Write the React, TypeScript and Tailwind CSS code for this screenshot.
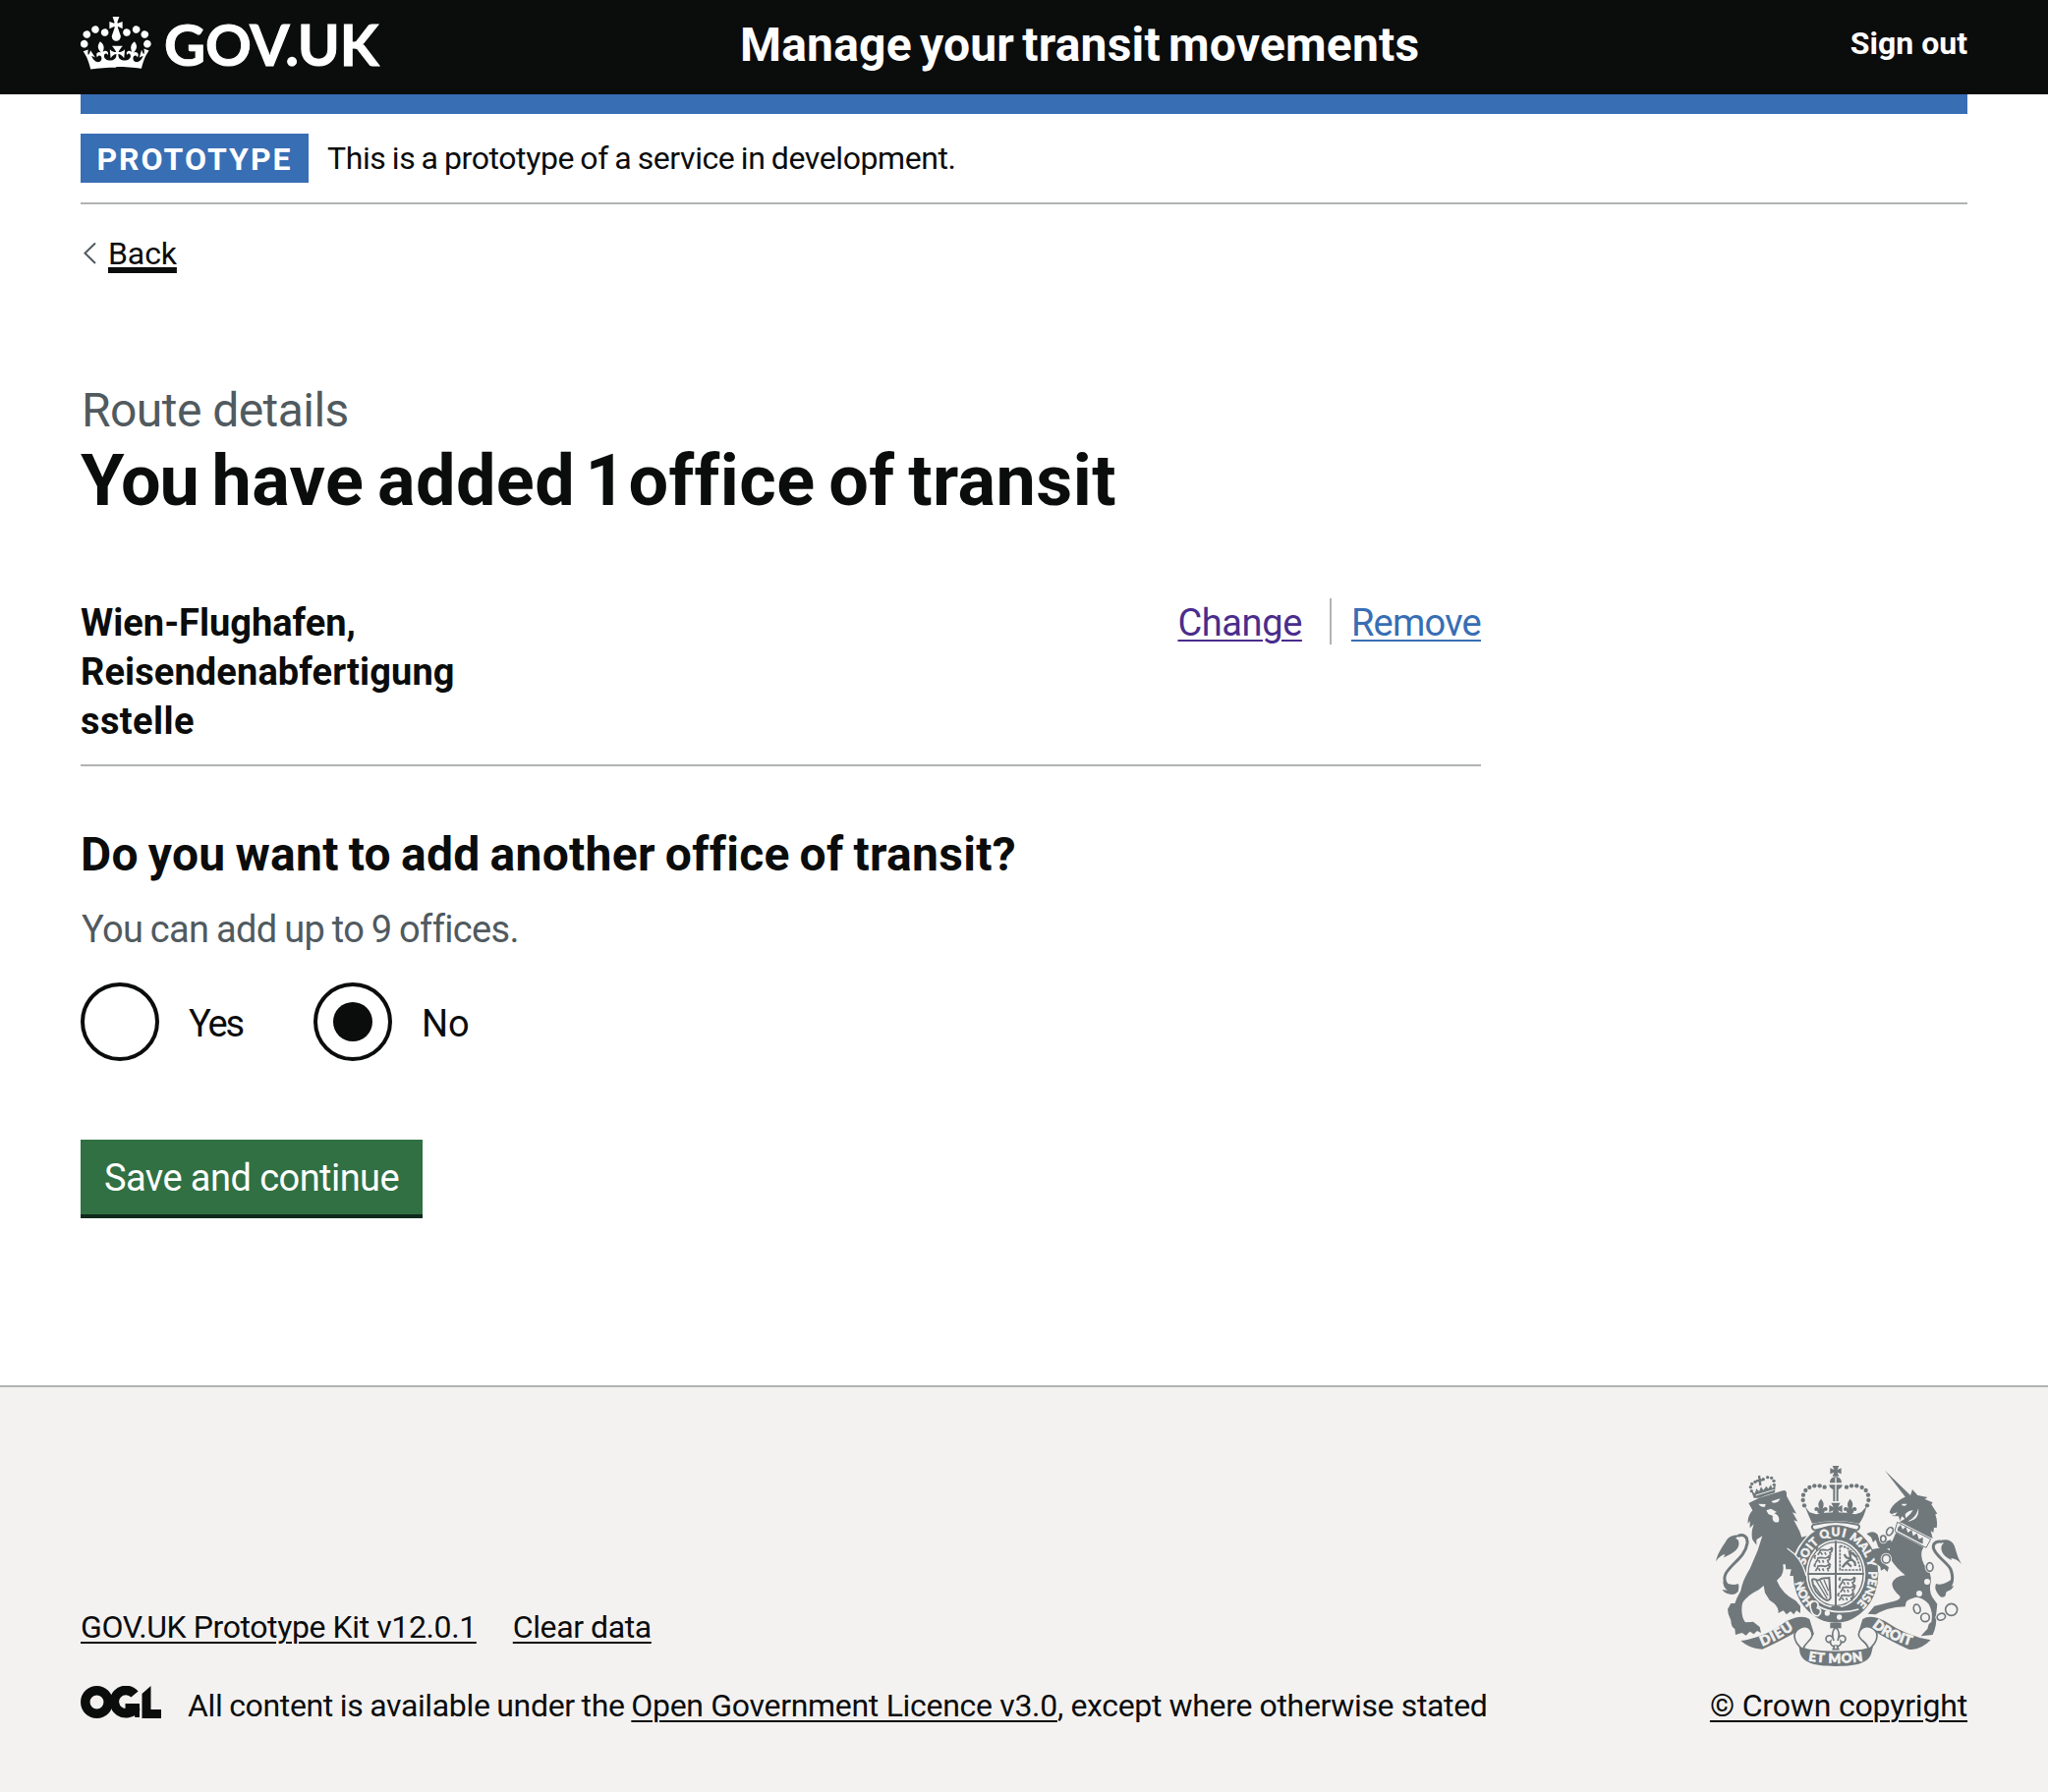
import type { ReactNode } from 'react';

function Crown() {
  return (
    <svg viewBox="0 4 35.800 26.600" className="h-[53.500px] w-[72px] fill-white" aria-hidden="true">
      <path d="M6.7 12.2c1 .4 2.1-.1 2.5-1s-.1-2.1-1-2.5c-1-.4-2.1.1-2.5 1-.4 1 0 2.1 1 2.5m-4.3 2.5c1 .4 2.1-.1 2.5-1s-.1-2.1-1-2.5c-1-.4-2.1.1-2.5 1-.5 1 0 2.1 1 2.5m-1.3 4.8c1 .4 2.1-.1 2.5-1 .4-1-.1-2.1-1-2.5-1-.4-2.1.1-2.5 1-.4 1 0 2.1 1 2.5m10.4-5.8c1 .4 2.1-.1 2.5-1s-.1-2.1-1-2.5c-1-.4-2.1.1-2.5 1s0 2.1 1 2.5m17.4-1.5c-1 .4-2.1-.1-2.5-1s.1-2.1 1-2.5c1-.4 2.1.1 2.5 1 .5 1 0 2.1-1 2.5m4.3 2.5c-1 .4-2.1-.1-2.5-1s.1-2.1 1-2.5c1-.4 2.1.1 2.5 1 .5 1 0 2.1-1 2.5m1.3 4.8c-1 .4-2.1-.1-2.5-1-.4-1 .1-2.1 1-2.5 1-.4 2.1.1 2.5 1 .4 1 0 2.1-1 2.5m-10.4-5.8c-1 .4-2.1-.1-2.5-1s.1-2.1 1-2.5c1-.4 2.1.1 2.5 1s0 2.1-1 2.5m-5.3-4.9 2.4 1.3V6.5l-2.4.8c-.1-.1-.1-.2-.2-.3s1-3 1-3h-3.4s1 2.900 1 3c-.1.1-.2.2-.2.3l-2.4-.8v3.6L17 9c.1.1.2.2.3.3l-1.4 4.2c-.1.2-.1.4-.1.6 0 1.100.8 2 1.900 2.200h.7c1.100-.2 1.900-1.100 1.900-2.200 0-.2 0-.4-.1-.6l-1.4-4.2c0-.1.1-.2.2-.3m-1 20.3c4.6 0 8.9.3 12.8.9 1.100-4.600 2.400-7.200 3.800-9.100l-2.600-.9c.3 1.300.3 1.900 0 2.800-.4-.4-.8-1.200-1.100-2.400l-1.200 4.200c.8-.5 1.400-.9 2-.9-1.200 2.600-2.700 3.200-3.600 3-1.200-.2-1.700-1.300-1.500-2.200.3-1.300 1.600-1.600 2.200-.1 1.200-2.400-.8-3.100-2.100-2.400 2-1.900 2.200-3.600.6-5.700-2.200 1.700-2.200 3.300-1.300 5.500-1.200-1.400-3.300-.7-2.600 1.400.9-1.400 2.100-.5 1.900.8-.2 1.100-1.700 2.100-3.500 1.900-2.600-.2-2.700-2.100-2.700-3.200.6-.1 1.800.5 2.900 2.100l.4-4.500c-1.100 1.200-2.100 1.400-3.200 1.400.4-1.200 2.100-3.100 2.100-3.100h-5.400s1.700 1.900 2.100 3.100c-1.100 0-2.100-.2-3.200-1.400l.4 4.500c1.100-1.600 2.300-2.200 2.900-2.100 0 1.100-.1 3-2.700 3.200-1.800.2-3.300-.8-3.500-1.900-.2-1.300 1-2.200 1.900-.8.7-2.100-1.400-2.800-2.600-1.400.9-2.200.9-3.800-1.300-5.500-1.600 2.100-1.400 3.800.6 5.700-1.300-.7-3.200 0-2.100 2.400.6-1.500 1.900-1.200 2.200.1.2.9-.3 2-1.500 2.200-.9.2-2.400-.4-3.600-3 .6 0 1.200.4 2 .9L5 21c-.3 1.200-.7 2-1.100 2.400-.3-.9-.3-1.500 0-2.800l-2.600.9c1.400 1.900 2.700 4.500 3.800 9.100 3.900-.6 8.200-.9 12.900-.9" />
    </svg>
  );
}

const G = '#70787b';
const B = '#f3f2f1';

const crownBeads: [number, number][] = [
  [288, 157], [284, 141], [285, 125], [292, 111], [304, 102], [319, 97], [335, 97], [350, 101],
  [480, 157], [484, 141], [483, 125], [476, 111], [464, 102], [448, 97], [432, 97], [417, 101],
];
const smallBeads: [number, number][] = [[127, 113], [124, 101], [128, 91], [138, 85], [163, 77], [176, 71], [188, 73], [195, 82], [196, 94]];
const chain: [number, number, number, number, number][] = [
  [549, 236, 9, 13, 30], [529, 259, 8, 10, 0], [538, 320, 12, 13, 0], [671, 345, 10, 13, 0],
  [632, 473, 10, 14, -15], [657, 499, 13, 13, 0], [706, 497, 13, 10, -20], [737, 475, 18, 18, 0],
];

function FleurDeLis({ x, y, s = 1 }: { x: number; y: number; s?: number }) {
  return (
    <g transform={`translate(${x} ${y}) scale(${s})`}>
      <path d="M0-24c8 9 10 16 3 30 3-9 13-11 15-3 1 5-4 8-8 5 1 7-5 9-7 9v6h-6v-6c-2 0-8-2-7-9-4 3-9 0-8-5 2-8 12-6 15 3-7-14-5-21 3-30z" />
    </g>
  );
}

function WalkingLion({ x, y }: { x: number; y: number }) {
  return (
    <g transform={`translate(${x} ${y})`}>
      <path
        d="M4 17l6-8 2-7 10-1 12 2 8-3 6 3-2 5-5 2 3 8M26 9l3 8M14 9l4 8M5 3C-2 3 0-5 6-4M42 0l4-5 5 4"
        fill="none"
        stroke={G}
        strokeWidth="5"
      />
    </g>
  );
}

/* Royal coat of arms: lion, crowned garter shield and unicorn above the motto ribbon. */
function CoatOfArms() {
  return (
    <svg viewBox="18 36 750 612" className="h-[204px] w-[250px]" fill={G} aria-hidden="true">
      <defs>
        <path id="garterTopLeft" d="M291 340 A101 114 0 0 1 345 264" />
        <path id="garterTopMid" d="M340 262 A101 114 0 0 1 425 260" />
        <path id="garterRight" d="M424 260 A101 114 0 0 1 484 352" />
        <path id="garterLower" d="M484 358 A101 114 0 0 1 440 463" />
        <path id="garterLeft" d="M318 452 A101 114 0 0 1 284 378" />
        <path id="mottoLeft" d="M160 587 Q215 566 264 528" />
        <path id="mottoMid" d="M300 631 Q384 646 478 630" />
        <path id="mottoRight" d="M495 527 Q545 568 622 588" />
      </defs>

      {/* lion tail */}
      <path d="M86 418C50 408 38 388 48 366c14-30 60-50 66-94 2-22-14-28-28-22" fill="none" stroke={G} strokeWidth="9" />
      <path d="M92 248c-16-2-34 2-42 16-10 18-24 32-32 64 10-14 18-20 28-22l-4 10c18-10 42-18 46-38 2-12-2-18-10-20 4-5 10-7 14-10z" />
      <path d="M86 396c-14 6-34 2-46-8 0 14 6 24 14 28l-17-2c10 14 30 18 42 12 8-6 12-20 7-30z" />
      {/* lion body */}
      <path d="M118 150 L150 134 L222 112 Q236 108 234 128 L246 150 L264 182 L252 178 L268 206 L256 202 L274 236 L280 254 L296 250 L270 282 L258 306 L236 288 L280 330 L292 370 L282 386 L272 370 L262 390 L256 372 L244 372 L248 352 L232 352 L230 336 L214 340 L218 322 Q230 350 218 372 L204 386 Q220 426 262 448 L276 464 L276 486 L264 478 L256 490 L246 480 L234 490 L224 478 L208 486 Q214 466 182 446 L168 424 L164 402 Q150 416 132 424 Q98 446 98 462 Q94 496 108 514 L132 512 L152 528 L156 546 L144 540 L134 550 L122 542 L110 554 L98 546 L78 552 L76 534 Q64 528 64 508 Q54 490 54 474 L64 456 L76 456 Q82 438 94 418 Q100 384 122 350 L146 294 L160 250 L142 262 L142 278 L130 262 Q124 240 134 214 L122 226 L122 204 L116 212 Q114 190 130 172 Z" />
      <path d="M148 152l22 1-2 8c-8 2-16-2-20-9zM188 144l26-8c-2 10-14 16-24 12zM172 172l14-5 18 10-8 4c10 4 18 12 14 26-12 6-22-4-18-18l-14-6z" fill={B} />
      {/* lion crown */}
      {smallBeads.map(([x, y]) => <circle key={`${x}-${y}`} cx={x} cy={y} r="5" />)}
      <path d="M134 134 L126 112 L137 120 L142 106 L150 114 L156 100 L163 110 L172 98 L178 106 L186 94 L190 104 L200 96 L198 118 Q170 126 150 134 Z" />
      <path d="M150 66l4 30M141 82l20-3" stroke={G} strokeWidth="7" />
      <path d="M140 126l56-17" stroke={B} strokeWidth="3" />

      {/* central crown */}
      {crownBeads.map(([x, y]) => <circle key={`${x}-${y}`} cx={x} cy={y} r="6.500" />)}
      <path d="M374 36h20l-5 12 12-5v18l-12-5 5 12h-20l5-12-12 5V43l12 5zM366 88c0-12 8-18 18-18s18 6 18 18zM364 94h40c0 8-6 12-12 14v36h-16v-36c-6-2-12-6-12-14z" />
      <path d="M384 72v74" stroke={B} strokeWidth="4" />
      <FleurDeLis x={339} y={164} s={1.1} />
      <FleurDeLis x={428} y={164} s={1.1} />
      <path d="M370 149h28l-7 13 13-6v22l-13-6 6 12h-26l6-12-13 6v-22l13 6zM290 160 L304 178 L324 184 Q384 172 444 184 L462 178 L478 160 Q472 190 456 212 Q384 196 312 212 Q300 186 290 160 Z" />
      <path d="M318 215c40-10 92-10 132 0 10 4 6 16-2 18-38-12-90-12-128 0-10-4-12-14-2-18z" fill={B} stroke={G} strokeWidth="6" />

      {/* garter and shield */}
      <ellipse cx="384" cy="366" rx="130" ry="149" />
      <ellipse cx="384" cy="366" rx="91" ry="104" fill={B} />
      <ellipse cx="384" cy="366" rx="84" ry="97" fill="none" stroke={G} strokeWidth="4" />
      <path d="M384 265v202M298 366h172" stroke={G} strokeWidth="6" />
      <WalkingLion x={325} y={291} />
      <WalkingLion x={318} y={315} />
      <WalkingLion x={318} y={340} />
      <WalkingLion x={394} y={382} />
      <WalkingLion x={394} y={405} />
      <WalkingLion x={390} y={430} />
      <path d="M397 280c30 4 56 30 62 74h-62z" fill="none" stroke={G} strokeWidth="5" strokeDasharray="8 3" />
      <path d="M404 346l12-14 14-12 12 10 2 12M430 320l-14-4-6-10M430 318l-4-18 12 6 12 10M418 332l14 12" fill="none" stroke={G} strokeWidth="7" />
      <path d="M312 384c8-8 14 6 22 0s18-4 30-6l4 62c-6 12-14 6-20 2-20-12-34-32-36-58z" fill="none" stroke={G} strokeWidth="6" />
      <path d="M324 386l34 56M336 386l24 46M348 384l14 34M318 400l26 38" stroke={G} strokeWidth="4" />
      <path d="M372 464h24l14 10-30 12-14-10z" />
      <path d="M306 452c20-8 28 4 22 18 12 2 14 16 2 24-18 2-26-20-24-42z" fill={G} stroke={B} strokeWidth="5" />
      <path d="M330 464c36 22 86 22 124 10" fill="none" stroke={B} strokeWidth="5" />
      <circle cx="358" cy="486" r="8" fill={B} />
      <circle cx="395" cy="498" r="8" fill={B} />
      <g fill={B} stroke={B} strokeWidth="1.500" className="font-[Lato] text-[36px] font-black">
        <text><textPath href="#garterLeft" textLength="76">HON</textPath></text>
        <text><textPath href="#garterTopLeft" textLength="82">SOIT</textPath></text>
        <text><textPath href="#garterTopMid" textLength="74">QUI</textPath></text>
        <text><textPath href="#garterRight" textLength="108">MAL Y</textPath></text>
        <text><textPath href="#garterLower" textLength="108">PENSE</textPath></text>
      </g>
      {/* lion paw resting on the garter */}
      <path d="M236 288 Q280 316 294 372 L282 394 L274 380 L264 396 L256 380 L258 356 L244 336" />
      <path d="M236 288 Q280 316 294 372" fill="none" stroke={B} strokeWidth="4" />

      {/* unicorn */}
      <path d="M534 50l78 76-12 10z" />
      <path d="M548 178 Q552 160 574 144 Q592 130 612 126 L618 108 L634 126 L664 132 L656 138 L680 148 L676 154 L694 182 L688 184 Q696 206 692 226 L684 224 L682 240 L674 234 L680 258 L662 250 L590 212 L578 208 Q606 194 620 172 Q606 172 596 184 L598 200 L586 190 L580 204 L576 190 L560 190 Z" />
      <path d="M586 152h16c-4 6-10 8-16 4zM636 166c4 24-10 38-32 40 14-8 28-18 32-40zM552 184l20-6-8 10z" fill={B} />
      <path d="M572 208 L674 260 L660 286 L564 236 Z" fill={B} stroke={G} strokeWidth="3" />
      <path d="M574 224l8-8 6 14 10-8 6 18 12-8 4 18 12-8 6 18 12-6 0 20-6-2-72-38z" />
      <path d="M568 240 L652 284 Q638 306 654 338 Q678 360 674 392 Q668 416 678 436 L694 458 L690 494 Q694 520 680 552 L644 556 L656 542 L664 534 L668 520 L676 512 Q682 484 668 458 Q640 430 620 440 Q598 446 598 456 L596 466 Q566 466 540 474 Q518 482 506 490 L482 488 L502 464 L560 450 Q584 444 580 434 Q556 414 556 396 Q562 374 596 370 Q570 350 552 322 L548 284 Z" />
      <path d="M478 244 Q500 230 512 246 L518 264 L534 268 L552 262 L560 284 L534 292 L514 284 L506 262 L498 270 L492 254 Z M492 292 L530 284 L552 296 L552 316 L524 322 L538 340 L546 346 L542 360 L532 350 L522 356 L520 344 L508 334 Z" />
      <circle cx="639" cy="426" r="9" fill={B} />
      <circle cx="663" cy="390" r="9" fill={B} />
      {chain.map(([x, y, rx, ry, a]) => (
        <g key={`${x}-${y}`} transform={`rotate(${a} ${x} ${y})`}>
          <ellipse cx={x} cy={y} rx={rx} ry={ry} fill="none" stroke={B} strokeWidth="10" />
          <ellipse cx={x} cy={y} rx={rx} ry={ry} fill={B} stroke={G} strokeWidth="5" />
        </g>
      ))}
      {/* unicorn tail */}
      <path d="M722 414c18-14 24-34 12-64-14-24-48-40-52-64-2-16 14-22 28-18" fill="none" stroke={G} strokeWidth="9" />
      <path d="M700 266c18-8 38-4 46 14 6 16 8 32 22 56-12-14-22-16-32-18l2 6c-16-8-30-16-32-36 0-10 4-14 8-16-6-4-10-4-14-6zM690 396c14 6 34-2 50-16 4 10 2 16-4 24l8-2c-4 12-14 16-22 18l-4 14c-6 4-12 4-16 0-10-12-18-22-12-38z" />

      {/* motto ribbon */}
      <path d="M94 570 Q170 560 234 510 Q280 488 304 504 L318 550 Q300 572 276 560 Q262 548 270 540 Q206 576 160 596 Q120 594 94 570 Z M674 568 Q600 556 534 510 Q490 488 466 504 L452 550 Q468 572 492 560 Q508 548 500 540 Q560 576 606 596 Q640 602 674 568 Z" />
      <path d="M260 552 Q272 572 274 604 C280 634 310 648 384 648 C460 648 488 634 494 604 Q498 576 510 552 Q504 590 466 596 Q384 608 304 596 Q264 590 260 552 Z" />
      <path d="M274 532c18-12 36-2 38 20 0 18-22 22-28 44-14-8-26-26-26-40 0-10 6-18 16-24zM496 532c-18-12-40-2-42 20 2 18 28 22 30 44 14-8 26-26 26-40 0-10-4-18-14-24z" fill={B} stroke={G} strokeWidth="5" />
      <g fill={B} stroke={B} strokeWidth="2" className="font-[Lato] text-[42px] font-black">
        <text><textPath href="#mottoLeft" textLength="110">DIEU</textPath></text>
        <text className="text-[40px]"><textPath href="#mottoMid" textLength="168">ET MON</textPath></text>
        <text><textPath href="#mottoRight" textLength="132">DROIT</textPath></text>
      </g>
      {/* fleur-de-lis */}
      <path d="M384 528c12 14 12 24 6 42 4-20 22-20 24-6 0 10-8 14-14 8 2 10-6 16-12 14l4 10h-16l4-10c-6 2-14-4-12-14-6 6-14 2-14-8 2-14 20-14 24 6-6-18-6-28 6-42z" fill={B} stroke={G} strokeWidth="5" />
      <path d="M367 516h34v16h-34z" />
    </svg>
  );
}

function OglLogo() {
  return (
    <svg viewBox="0 0 82 33" className="h-[33px] w-[82px] shrink-0" aria-label="OGL" fill="none" stroke="#0b0c0c" strokeWidth="9.500">
      <circle cx="16.500" cy="16.500" r="11.700" />
      <path d="M55 8.500A11.700 11.700 0 1 0 56.500 21.500" />
      <path d="M45.500 18H60v14h-4.500l-1.500-3.500-6.500-5.500h-2z" fill="#0b0c0c" stroke="none" />
      <path d="M62.500 8l9-8v24H82v9H62.500z" fill="#0b0c0c" stroke="none" />
    </svg>
  );
}

function FooterLink({ children, className = '' }: { children: ReactNode; className?: string }) {
  return (
    <a href="#" className={`underline decoration-2 underline-offset-4 ${className}`}>
      {children}
    </a>
  );
}

export default function App() {
  return (
    <div className="min-h-[1824px] w-full bg-white font-[Roboto,sans-serif] text-[#0b0c0c]">
      <header className="h-24 bg-[#0b0c0c] px-[82px] text-white">
        <div className="flex h-full">
          <a href="#" className="flex w-[671px] items-start pt-[17px]">
            <Crown />
            <span className="-mt-px ml-[13px] font-[Lato] text-[58px] leading-[58px] font-bold tracking-[-0.2px] [-webkit-text-stroke:1px_white]">GOV.UK</span>
          </a>
          <a href="#" className="mt-[16px] text-[48px] leading-[60px] font-bold tracking-[0.2px] whitespace-nowrap [word-spacing:-4px]">
            Manage your transit movements
          </a>
          <a href="#" className="mt-[24px] ml-auto text-[32px] leading-[40px] font-bold whitespace-nowrap">
            Sign out
          </a>
        </div>
      </header>

      <div className="mx-[82px]">
        <div className="h-5 bg-[#386eb4]" />
        <div className="flex items-center border-b-2 border-[#b1b3b3] py-5 text-[32px] leading-[50px]">
          <strong className="flex h-[50px] w-[232px] items-center justify-center bg-[#386eb4] pt-[2px] font-bold tracking-[2px] text-white">
            PROTOTYPE
          </strong>
          <span className="ml-[19px] tracking-[-0.4px] [word-spacing:-1.2px]">This is a prototype of a service in development.</span>
        </div>

        <a href="#" className="mt-[30px] flex h-10 items-center text-[32px] leading-[40px]">
          <svg viewBox="0 0 28 40" className="h-10 w-7" fill="none" stroke="#505a5f" strokeWidth="2">
            <path d="M15 9.500 4.500 19.700 15 30" />
          </svg>
          <span className="tracking-[-0.1px] underline decoration-[6px] underline-offset-[3px] [text-decoration-skip-ink:none]">Back</span>
        </a>

        <main className="w-[1425px] pt-[115px]">
          <p className="pl-px text-[48px] leading-[50px] tracking-[-0.55px] text-[#505a5f]">Route details</p>
          <h1 className="mt-[9px] text-[72px] leading-[75px] font-bold tracking-[0.4px] whitespace-nowrap [word-spacing:-4.500px]">
            <span className="tracking-[-1.2px]">You</span> have added<span className="[word-spacing:-8px]"> 1</span>
            <span className="[word-spacing:-16px]"> </span>office of transit
          </h1>

          <div className="mt-[82px] flex justify-between border-b-2 border-[#b1b3b3] pb-[19px] text-[38px] leading-[50px]">
            <div className="w-[400px] font-bold">
              Wien-Flughafen,
              <br />
              <span className="tracking-[0.1px]">Reisendenabfertigung</span>
              <br />
              <span className="tracking-[0.4px]">sstelle</span>
            </div>
            <div className="flex h-[50px]">
              <a href="#" className="tracking-[-0.4px] text-[#4a2d8c] underline decoration-2 underline-offset-4">Change</a>
              <span className="mr-5 ml-[28px] h-[47px] w-[2px] bg-[#b1b3b3]" />
              <a href="#" className="tracking-[-0.75px] text-[#386eb4] underline decoration-2 underline-offset-4">Remove</a>
            </div>
          </div>

          <h2 className="mt-[60px] text-[48px] leading-[60px] font-bold tracking-[0.3px] whitespace-nowrap [word-spacing:-2.3px]">
            Do you want to add another office of transit?
          </h2>
          <p className="mt-[21px] pl-px text-[38px] leading-[50px] tracking-[-0.65px] text-[#505a5f] [word-spacing:-1.2px]">
            You can add up to 9 offices.
          </p>

          <div className="mt-[29px] flex h-20 text-[38px] leading-[84px]">
            <label className="flex w-[237px]">
              <span className="h-20 w-20 rounded-full border-4 border-[#0b0c0c]" />
              <span className="ml-[30px] tracking-[-2.1px]">Yes</span>
            </label>
            <label className="flex">
              <span className="flex h-20 w-20 items-center justify-center rounded-full border-4 border-[#0b0c0c]">
                <span className="h-10 w-10 rounded-full bg-[#0b0c0c]" />
              </span>
              <span className="ml-[30px] tracking-[-0.2px]">No</span>
            </label>
          </div>

          <button className="mt-20 block h-20 w-[348px] border-b-4 border-[#0d2a1b] bg-[#307043] pt-[2px] text-center text-[38px] leading-[74px] tracking-[-0.55px] whitespace-nowrap text-white">
            Save and continue
          </button>
        </main>
      </div>

      <footer className="mt-[170px] flex h-[414px] items-start justify-between border-t-2 border-[#b1b3b3] bg-[#f3f2f1] px-[82px] pt-20 text-[32px] leading-[40px]">
        <div className="pt-[144px]">
          <div className="flex gap-[37px]">
            <FooterLink className="tracking-[-0.4px]">GOV.UK Prototype Kit v12.0.1</FooterLink>
            <FooterLink className="tracking-[-0.41px]">Clear data</FooterLink>
          </div>
          <div className="mt-10 flex">
            <OglLogo />
            <p className="ml-[27px] tracking-[-0.35px] whitespace-nowrap">
              <span className="[word-spacing:-0.8px]">All content is available under the </span>
              <FooterLink className="tracking-[-0.31px]">Open Government Licence v3.0</FooterLink>, except where otherwise stated
            </p>
          </div>
        </div>
        <div className="flex w-[262px] flex-col items-center">
          <CoatOfArms />
          <FooterLink className="mt-5 tracking-[-0.17px] whitespace-nowrap">© Crown copyright</FooterLink>
        </div>
      </footer>
    </div>
  );
}
